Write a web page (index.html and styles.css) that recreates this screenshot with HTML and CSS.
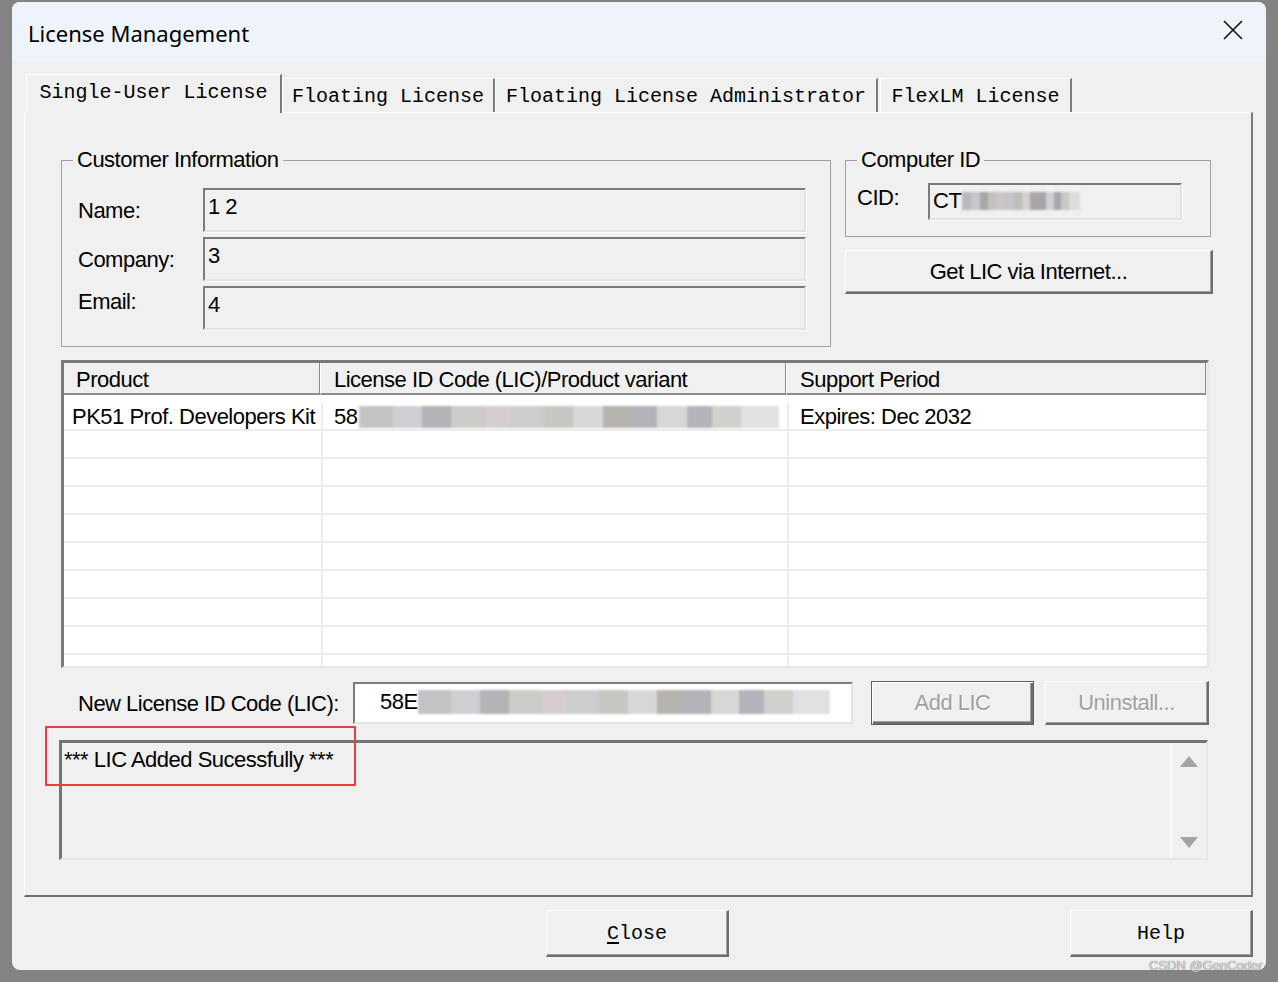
FILE: index.html
```html
<!DOCTYPE html>
<html lang="en">
<head>
  <meta charset="UTF-8">
  <meta name="viewport" content="width=device-width, initial-scale=1.0">
  <title>License Management</title>
  <link rel="stylesheet" href="styles.css">
</head>
<body>
  <div class="window">
    <div class="titlebar">
      <span class="title">License Management</span>
      <svg class="close-x" width="20" height="20" viewBox="0 0 20 20">
        <path d="M1 1 L19 19 M19 1 L1 19" stroke="#111" stroke-width="1.6" fill="none"/>
      </svg>
    </div>
    <div class="client">
      <div class="tabs">
        <div class="tab active t1">Single-User License</div>
        <div class="tab t2">Floating License</div>
        <div class="tab t3">Floating License Administrator</div>
        <div class="tab t4">FlexLM License</div>
      </div>
      <div class="panel">
        <div class="top-row">
          <fieldset class="group customer">
            <legend>Customer Information</legend>
            <div class="form-grid">
              <label>Name:</label><div class="field">1 2</div>
              <label>Company:</label><div class="field">3</div>
              <label class="up">Email:</label><div class="field">4</div>
            </div>
          </fieldset>
          <div class="right-col">
            <fieldset class="group computer">
              <legend>Computer ID</legend>
              <div class="cid-row">
                <label>CID:</label>
                <div class="field cid">CT<span class="blur b-cid"></span></div>
              </div>
            </fieldset>
            <div class="btn get-lic">Get LIC via Internet...</div>
          </div>
        </div>

        <div class="listview">
          <div class="lv-head">
            <div class="hcell h1">Product</div>
            <div class="hcell h2">License ID Code (LIC)/Product variant</div>
            <div class="hcell h3">Support Period</div>
          </div>
          <div class="lv-body">
            <div class="row">
              <div class="cell c1">PK51 Prof. Developers Kit</div>
              <div class="cell c2">58<span class="blur b-lic"></span></div>
              <div class="cell c3">Expires: Dec 2032</div>
            </div>
            <div class="row"><div class="cell c1"></div><div class="cell c2"></div><div class="cell c3"></div></div>
            <div class="row"><div class="cell c1"></div><div class="cell c2"></div><div class="cell c3"></div></div>
            <div class="row"><div class="cell c1"></div><div class="cell c2"></div><div class="cell c3"></div></div>
            <div class="row"><div class="cell c1"></div><div class="cell c2"></div><div class="cell c3"></div></div>
            <div class="row"><div class="cell c1"></div><div class="cell c2"></div><div class="cell c3"></div></div>
            <div class="row"><div class="cell c1"></div><div class="cell c2"></div><div class="cell c3"></div></div>
            <div class="row"><div class="cell c1"></div><div class="cell c2"></div><div class="cell c3"></div></div>
            <div class="row"><div class="cell c1"></div><div class="cell c2"></div><div class="cell c3"></div></div>
            <div class="row"><div class="cell c1"></div><div class="cell c2"></div><div class="cell c3"></div></div>
          </div>
        </div>

        <div class="lic-row">
          <label class="lic-label">New License ID Code (LIC):</label>
          <div class="lic-input">58E<span class="blur b-input"></span></div>
          <div class="btn default disabled add-lic">Add LIC</div>
          <div class="btn disabled uninstall">Uninstall...</div>
        </div>

        <div class="output">
          <div class="output-text">*** LIC Added Sucessfully ***</div>
          <div class="scrollbar">
            <svg width="18" height="11" viewBox="0 0 18 11"><path d="M9 0 L18 11 L0 11 Z" fill="#a3a3a3"/></svg>
            <svg width="18" height="11" viewBox="0 0 18 11"><path d="M0 0 L18 0 L9 11 Z" fill="#a3a3a3"/></svg>
          </div>
        </div>

        <div class="annot"></div>
      </div>
      <div class="footer">
        <div class="btn mono close-btn"><u>C</u>lose</div>
        <div class="btn mono help-btn">Help</div>
      </div>
    </div>
  </div>
  <div class="watermark">CSDN @GenCoder</div>
</body>
</html>
```

FILE: styles.css
```css
body {
  margin: 0;
  background: #838383;
  font-family: "Liberation Sans", Arial, sans-serif;
  font-size: 22px;
  letter-spacing: -0.5px;
  color: #000;
  position: relative;
  height: 982px;
  overflow: hidden;
}
.window {
  margin: 2px 0 0 12px;
  width: 1254px;
  height: 968px;
  border-radius: 8px;
  overflow: hidden;
  background: #f0f0f0;
}
.titlebar {
  height: 60px;
  background: #eef4fa;
  display: flex;
  align-items: center;
  justify-content: space-between;
  padding: 0 23px 0 16px;
}
.title {
  font-family: "Noto Sans", sans-serif;
  font-size: 22px;
  letter-spacing: 0;
  padding-top: 1px;
}
.close-x {
  margin-top: -4px;
}
.client {
  padding: 12px 13px 0 12px;
}

/* tabs */
.tabs {
  display: flex;
  align-items: flex-end;
  height: 38px;
  padding-left: 2px;
  position: relative;
  z-index: 1;
}
.tab {
  box-sizing: border-box;
  height: 34px;
  padding-top: 3px;
  line-height: 30px;
  font-family: "Liberation Mono", monospace;
  font-size: 20px;
  letter-spacing: 0;
  text-align: center;
  white-space: nowrap;
  background: #f0f0f0;
  border-top: 1px solid #fff;
  border-left: 1px solid #fff;
  border-right: 2px solid #7c7c7c;
}
.tab.active {
  height: 39px;
  padding-top: 2px;
  line-height: 32px;
  margin-bottom: -1px;
}
.t1 { width: 256px; }
.t2 { width: 213px; }
.t3 { width: 383px; }
.t4 { width: 192px; margin-left: 2px; }

/* panel */
.panel {
  box-sizing: border-box;
  height: 785px;
  border-top: 1px solid #fff;
  border-left: 1px solid #fff;
  border-right: 2px solid #7a7a7a;
  border-bottom: 2px solid #6d6d6d;
  padding: 34px 0 0 36px;
  position: relative;
}
.top-row {
  display: flex;
  gap: 14px;
  align-items: flex-start;
}
.group {
  box-sizing: border-box;
  margin: 0;
  padding: 0;
  min-width: 0;
  border: 1px solid #a0a0a0;
}
.group legend {
  margin-left: 11px;
  padding: 0 4px;
  line-height: 26px;
}
.customer { width: 770px; }
.form-grid {
  display: grid;
  grid-template-columns: 125px 603px;
  grid-auto-rows: 44px;
  row-gap: 5px;
  padding: 15px 0 16px 16px;
}
.form-grid label {
  line-height: 26px;
  padding-top: 10px;
}
.form-grid label.up {
  padding-top: 3px;
}
.field {
  box-sizing: border-box;
  height: 44px;
  border: 2px solid;
  border-color: #7b7b7b #e3e3e3 #e3e3e3 #7b7b7b;
  box-shadow: 1px 1px 0 #fff;
  background: #f0f0f0;
  padding: 4px 3px;
  line-height: 26px;
  white-space: nowrap;
  overflow: hidden;
}
.right-col {
  width: 368px;
}
.computer { width: 366px; }
.cid-row {
  display: flex;
  align-items: flex-start;
  padding: 10px 0 16px 11px;
}
.cid-row label {
  width: 71px;
  line-height: 26px;
  padding-top: 2px;
}
.field.cid {
  width: 254px;
  height: 37px;
  padding: 3px 3px;
}
.btn {
  box-sizing: border-box;
  display: flex;
  align-items: center;
  justify-content: center;
  background: #f0f0f0;
  border-top: 1px solid #fff;
  border-left: 1px solid #fff;
  border-right: 2px solid #6d6d6d;
  border-bottom: 2px solid #6d6d6d;
  box-shadow: inset -1px -1px 0 #a0a0a0;
  white-space: nowrap;
}
.get-lic {
  margin-top: 13px;
  height: 44px;
  width: 368px;
}

/* list view */
.listview {
  box-sizing: border-box;
  margin-top: 13px;
  width: 1148px;
  height: 308px;
  border-style: solid;
  border-width: 3px 2px 2px 3px;
  border-color: #7a7a7a #e6e6e6 #e6e6e6 #7a7a7a;
  background: #fff;
  overflow: hidden;
}
.lv-head {
  display: flex;
  height: 32px;
  background: #f0f0f0;
}
.hcell {
  box-sizing: border-box;
  height: 32px;
  line-height: 26px;
  padding: 4px 0 0 12px;
  border-left: 1px solid #fff;
  border-right: 1px solid #8c8c8c;
  border-bottom: 2px solid #8c8c8c;
  white-space: nowrap;
}
.h1 { width: 256px; border-left: none; }
.h2 { width: 466px; padding-left: 13px; }
.h3 { width: 420px; padding-left: 13px; }
.lv-body {
  height: 271px;
  padding-top: 8px;
  box-sizing: border-box;
  overflow: hidden;
}
.row {
  display: flex;
  height: 28px;
}
.cell {
  box-sizing: border-box;
  height: 28px;
  line-height: 26px;
  padding-top: 1px;
  border-bottom: 2px solid #ececec;
  border-right: 2px solid #ececec;
  white-space: nowrap;
  overflow: hidden;
}
.c1 { width: 259px; padding-left: 8px; }
.c2 { width: 466px; padding-left: 11px; }
.c3 { flex: 1; padding-left: 11px; border-right: none; }

/* blurred parts */
.blur {
  display: inline-block;
  height: 18px;
  vertical-align: -2px;
  filter: blur(0.8px);
  background: linear-gradient(90deg,
    #b9b9b9 0 8%, #c8c5cc 8% 15%, #a8a6ab 15% 22%, #c2c2be 22% 30%,
    #cdc4c8 30% 36%, #c3c6c4 36% 44%, #bfbdb8 44% 51%, #d0d2d2 51% 58%,
    #aaa6a2 58% 64%, #a6a5ad 64% 71%, #cfd1d0 71% 78%, #a8a6ae 78% 84%,
    #c9c8c4 84% 91%, #dcdcdc 91% 100%);
}
.b-cid {
  width: 118px;
  margin-left: 1px;
}
.b-lic {
  width: 420px;
  margin-left: 2px;
  height: 22px;
  vertical-align: -4px;
  opacity: 0.85;
}
.b-input {
  width: 412px;
  height: 24px;
  vertical-align: -5px;
  opacity: 0.85;
}

/* LIC row */
.lic-row {
  display: flex;
  align-items: center;
  height: 44px;
  margin-top: 13px;
  padding-left: 17px;
}
.lic-label {
  width: 275px;
  white-space: nowrap;
  padding-top: 2px;
}
.lic-input {
  box-sizing: border-box;
  width: 500px;
  height: 42px;
  background: #fff;
  border: 2px solid;
  border-color: #7a7a7a #e3e3e3 #e3e3e3 #7a7a7a;
  padding: 3px 0 0 25px;
  line-height: 30px;
  white-space: nowrap;
  overflow: hidden;
}
.btn.disabled {
  color: #a0a0a0;
  text-shadow: 1px 1px 0 #fff;
}
.add-lic {
  width: 163px;
  height: 44px;
  margin-left: 18px;
  border: 1px solid #5e5e5e;
  box-shadow: inset 1px 1px 0 #fff, inset -2px -2px 0 #6d6d6d, inset -3px -3px 0 #a0a0a0;
}
.uninstall {
  width: 164px;
  height: 44px;
  margin-left: 11px;
}

/* output box */
.output {
  box-sizing: border-box;
  display: flex;
  margin-top: 15px;
  margin-left: -2px;
  width: 1149px;
  height: 120px;
  border-style: solid;
  border-width: 3px 2px 2px 3px;
  border-color: #747474 #e6e6e6 #e6e6e6 #747474;
  background: #f0f0f0;
}
.output-text {
  flex: 1;
  padding: 4px 2px;
  line-height: 26px;
}
.scrollbar {
  width: 34px;
  border-left: 2px solid #fafafa;
  display: flex;
  flex-direction: column;
  justify-content: space-between;
  align-items: center;
  padding: 13px 0 10px;
}

.annot {
  position: absolute;
  left: 20px;
  top: 613px;
  width: 311px;
  height: 60px;
  box-sizing: border-box;
  border: 2px solid #ef3b3b;
}

/* footer */
.footer {
  display: flex;
  justify-content: space-between;
  padding: 13px 0 0 522px;
}
.mono {
  font-family: "Liberation Mono", monospace;
  font-size: 20px;
  letter-spacing: 0;
}
.close-btn, .help-btn {
  width: 183px;
  height: 47px;
}
.close-btn u {
  text-underline-offset: 3px;
}

.watermark {
  position: absolute;
  left: 1149px;
  top: 958px;
  font-family: "Liberation Sans", Arial, sans-serif;
  font-size: 13px;
  letter-spacing: 0;
  color: #d6d6d6;
  text-shadow: 0 0 1px #555;
}
```
